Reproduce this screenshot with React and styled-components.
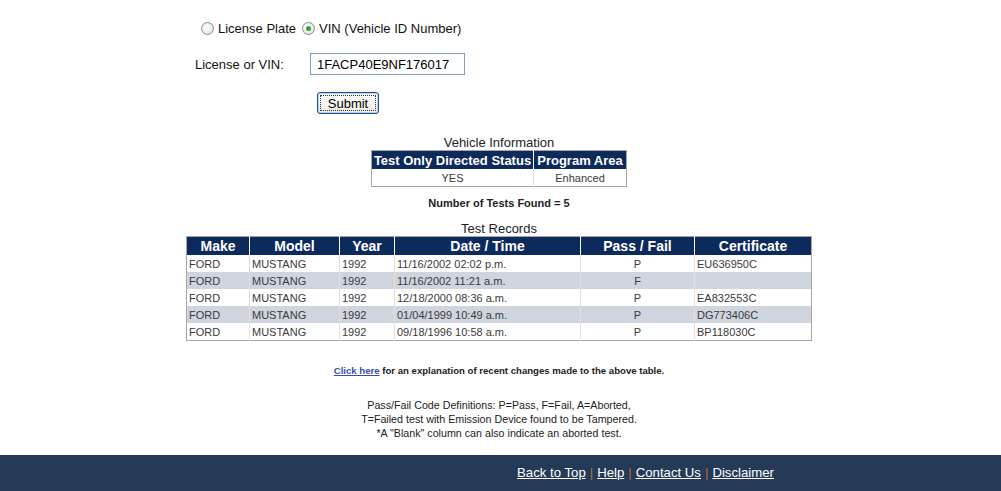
import React from 'react';
import styled, { createGlobalStyle } from 'styled-components';

const GlobalStyle = createGlobalStyle`
  html, body {
    margin: 0;
    padding: 0;
    background: #ffffff;
    font-family: Arial, "Liberation Sans", sans-serif;
    color: #000;
  }
`;

const Page = styled.div`
  width: 1001px;
  min-height: 491px;
  display: flex;
  flex-direction: column;
`;

const SearchForm = styled.form`
  padding: 18px 0 0 195px;
  font-size: 13px;
`;

const RadioRow = styled.div`
  display: flex;
  align-items: center;
  height: 20px;
  margin-left: 6px;
`;

const RadioOption = styled.label`
  display: flex;
  align-items: center;
  margin-right: 6px;
  color: #111;
`;

const RadioDot = styled.span`
  width: 11px;
  height: 11px;
  border-radius: 50%;
  border: 1px solid #7c8ea6;
  background: radial-gradient(circle at 40% 40%, #ffffff 0%, #e6e6e0 70%, #cfcfc8 100%);
  margin-right: 4px;
  display: inline-flex;
  align-items: center;
  justify-content: center;
  &::after {
    content: '';
    width: 5px;
    height: 5px;
    border-radius: 50%;
    background: ${p => (p.checked ? '#2fa52f' : 'transparent')};
  }
`;

const FieldRow = styled.div`
  display: grid;
  grid-template-columns: 115px auto;
  align-items: center;
  margin-top: 15px;
`;

const FieldLabel = styled.span`
  color: #111;
`;

const TextField = styled.input`
  width: 155px;
  height: 22px;
  box-sizing: border-box;
  border: 1px solid #7f9db9;
  padding: 2px 6px;
  font-family: Arial, "Liberation Sans", sans-serif;
  font-size: 13px;
  color: #000;
`;

const SubmitButton = styled.button`
  margin: 17px 0 0 122px;
  width: 62px;
  height: 22px;
  box-sizing: border-box;
  border: 1px solid #1d4f95;
  border-radius: 3px;
  background: linear-gradient(#ffffff, #ecebe4);
  font-family: Arial, "Liberation Sans", sans-serif;
  font-size: 13px;
  color: #000;
  padding: 0;
  outline: 1px dotted #333;
  outline-offset: -4px;
  box-shadow: inset 0 0 0 1px #bcd0ef;
`;

const Results = styled.div`
  display: flex;
  flex-direction: column;
  align-items: center;
  margin-left: -3px;
`;

const Caption = styled.div`
  font-size: 13px;
  color: #222;
  line-height: 15px;
  margin-top: ${p => p.top}px;
  height: 15px;
`;

const Table = styled.table`
  border-collapse: collapse;
  border: 1px solid #a6a6a6;
  table-layout: fixed;
`;

const Th = styled.th`
  background: #0c2a5c;
  color: #fff;
  font-size: ${p => p.size || 13}px;
  font-weight: bold;
  height: 18px;
  padding: 0 1px;
  border-left: 1px solid #ffffff;
  white-space: nowrap;
  &:first-child {
    border-left: none;
  }
`;

const Td = styled.td`
  font-size: 11px;
  height: 17px;
  padding: 0 2px;
  color: #3a3a3a;
  text-align: ${p => p.align || 'left'};
  border-left: 1px solid #e8dcdc;
  background: ${p => (p.shade ? '#ced5df' : '#ffffff')};
  white-space: nowrap;
  &:first-child {
    border-left: none;
  }
`;

const Count = styled.div`
  font-size: 11px;
  font-weight: bold;
  color: #222;
  line-height: 14px;
  margin-top: 9px;
`;

const Note = styled.p`
  margin: 24px 0 0;
  font-size: 9.6px;
  font-weight: bold;
  color: #222;
  text-align: center;
`;

const NoteLink = styled.a`
  color: #3a4ea6;
  text-decoration: underline;
`;

const Definitions = styled.p`
  margin: 22px 0 0;
  font-size: 10.7px;
  line-height: 14px;
  color: #222;
  text-align: center;
`;

const Footer = styled.footer`
  margin-top: 15px;
  background: #253a57;
  height: 37px;
  box-sizing: border-box;
  padding: 0 0 3px 290px;
  display: flex;
  align-items: center;
  justify-content: center;
  font-size: 13.2px;
`;

const FooterLink = styled.a`
  color: #fff;
  text-decoration: underline;
`;

const Pipe = styled.span`
  color: #b8693c;
  margin: 0 4px;
`;

const records = [
  { date: '11/16/2002 02:02 p.m.', result: 'P', cert: 'EU636950C' },
  { date: '11/16/2002 11:21 a.m.', result: 'F', cert: '' },
  { date: '12/18/2000 08:36 a.m.', result: 'P', cert: 'EA832553C' },
  { date: '01/04/1999 10:49 a.m.', result: 'P', cert: 'DG773406C' },
  { date: '09/18/1996 10:58 a.m.', result: 'P', cert: 'BP118030C' },
];

const recordColumns = [
  { label: 'Make', width: 63 },
  { label: 'Model', width: 90 },
  { label: 'Year', width: 55 },
  { label: 'Date / Time', width: 186 },
  { label: 'Pass / Fail', width: 114 },
  { label: 'Certificate', width: 117 },
];

const footerLinks = ['Back to Top', 'Help', 'Contact Us', 'Disclaimer'];

export default function App() {
  return (
    <Page>
      <GlobalStyle />
      <SearchForm onSubmit={e => e.preventDefault()}>
        <RadioRow>
          <RadioOption>
            <RadioDot />
            License Plate
          </RadioOption>
          <RadioOption>
            <RadioDot checked />
            VIN (Vehicle ID Number)
          </RadioOption>
        </RadioRow>
        <FieldRow>
          <FieldLabel>License or VIN:</FieldLabel>
          <TextField defaultValue="1FACP40E9NF176017" />
        </FieldRow>
        <SubmitButton type="submit">Submit</SubmitButton>
      </SearchForm>

      <Results>
        <Caption top={21}>Vehicle Information</Caption>
        <Table>
          <colgroup>
            <col style={{ width: 162 }} />
            <col style={{ width: 93 }} />
          </colgroup>
          <thead>
            <tr>
              <Th>Test Only Directed Status</Th>
              <Th>Program Area</Th>
            </tr>
          </thead>
          <tbody>
            <tr>
              <Td align="center">YES</Td>
              <Td align="center">Enhanced</Td>
            </tr>
          </tbody>
        </Table>

        <Count>Number of Tests Found = 5</Count>

        <Caption top={11}>Test Records</Caption>
        <Table>
          <colgroup>
            {recordColumns.map(c => (
              <col key={c.label} style={{ width: c.width }} />
            ))}
          </colgroup>
          <thead>
            <tr>
              {recordColumns.map(c => (
                <Th key={c.label} size={14}>{c.label}</Th>
              ))}
            </tr>
          </thead>
          <tbody>
            {records.map((r, i) => {
              const shade = i % 2 === 1;
              return (
                <tr key={r.date}>
                  <Td shade={shade}>FORD</Td>
                  <Td shade={shade}>MUSTANG</Td>
                  <Td shade={shade}>1992</Td>
                  <Td shade={shade}>{r.date}</Td>
                  <Td shade={shade} align="center">{r.result}</Td>
                  <Td shade={shade}>{r.cert}</Td>
                </tr>
              );
            })}
          </tbody>
        </Table>

        <Note>
          <NoteLink href="#">Click here</NoteLink> for an explanation of recent changes made to the above table.
        </Note>

        <Definitions>
          Pass/Fail Code Definitions: P=Pass, F=Fail, A=Aborted,
          <br />
          T=Failed test with Emission Device found to be Tampered.
          <br />
          *A "Blank" column can also indicate an aborted test.
        </Definitions>
      </Results>

      <Footer>
        {footerLinks.map((label, i) => (
          <React.Fragment key={label}>
            {i > 0 && <Pipe>|</Pipe>}
            <FooterLink href="#">{label}</FooterLink>
          </React.Fragment>
        ))}
      </Footer>
    </Page>
  );
}
